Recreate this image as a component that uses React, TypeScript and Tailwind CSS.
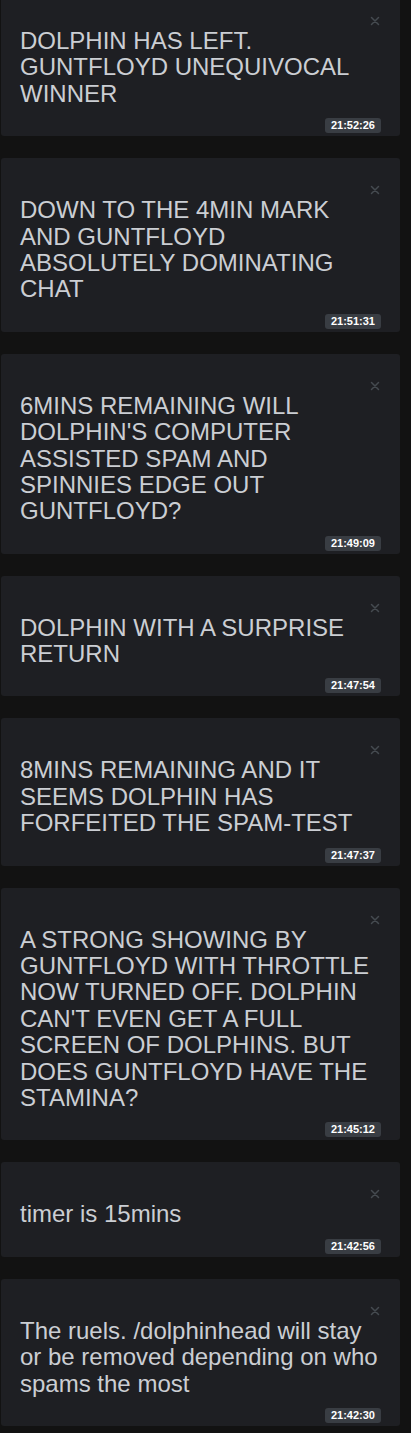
import React from 'react';

interface Msg {
  text: string;
  time: string;
}

const messages: Msg[] = [
  { text: 'DOLPHIN HAS LEFT. GUNTFLOYD UNEQUIVOCAL WINNER', time: '21:52:26' },
  { text: 'DOWN TO THE 4MIN MARK AND GUNTFLOYD ABSOLUTELY DOMINATING CHAT', time: '21:51:31' },
  {
    text: "6MINS REMAINING WILL DOLPHIN'S COMPUTER ASSISTED SPAM AND SPINNIES EDGE OUT GUNTFLOYD?",
    time: '21:49:09',
  },
  { text: 'DOLPHIN WITH A SURPRISE RETURN', time: '21:47:54' },
  { text: '8MINS REMAINING AND IT SEEMS DOLPHIN HAS FORFEITED THE SPAM-TEST', time: '21:47:37' },
  {
    text: "A STRONG SHOWING BY GUNTFLOYD WITH THROTTLE NOW TURNED OFF. DOLPHIN CAN'T EVEN GET A FULL SCREEN OF DOLPHINS. BUT DOES GUNTFLOYD HAVE THE STAMINA?",
    time: '21:45:12',
  },
  { text: 'timer is 15mins', time: '21:42:56' },
  {
    text: 'The ruels. /dolphinhead will stay or be removed depending on who spams the most',
    time: '21:42:30',
  },
];

const CloseIcon = () => (
  <svg width="10" height="10" viewBox="0 0 10 10" fill="none">
    <path d="M1.5 1.5 L8.5 8.5 M8.5 1.5 L1.5 8.5" stroke="#454a50" strokeWidth="1.5" strokeLinecap="round" />
  </svg>
);

const MessageCard: React.FC<Msg> = ({ text, time }) => {
  return (
    <div className="relative bg-[#1e1f23] rounded-[3px] pl-[19px] pr-[19px] pt-[39px] pb-[3px]">
      <button className="absolute top-[27px] right-[20px] flex items-center justify-center">
        <CloseIcon />
      </button>
      <p className="text-[24px] leading-[1.1] text-[#cbced3]">{text}</p>
      <div className="flex justify-end mt-[11px]">
        <span className="bg-[#393d43] text-white font-bold text-[11px] leading-[15px] h-[15px] px-[6px] rounded-[3px]">
          {time}
        </span>
      </div>
    </div>
  );
};

export default function App() {
  return (
    <div
      className="min-h-[1433px] bg-[#121212] overflow-hidden"
      style={{ fontFamily: '"Liberation Sans", Arial, sans-serif' }}
    >
      <div className="-mt-[11px] pl-[1px] pr-[11px] flex flex-col gap-[22px]">
        {messages.map((m) => (
          <MessageCard key={m.time} text={m.text} time={m.time} />
        ))}
      </div>
    </div>
  );
}
